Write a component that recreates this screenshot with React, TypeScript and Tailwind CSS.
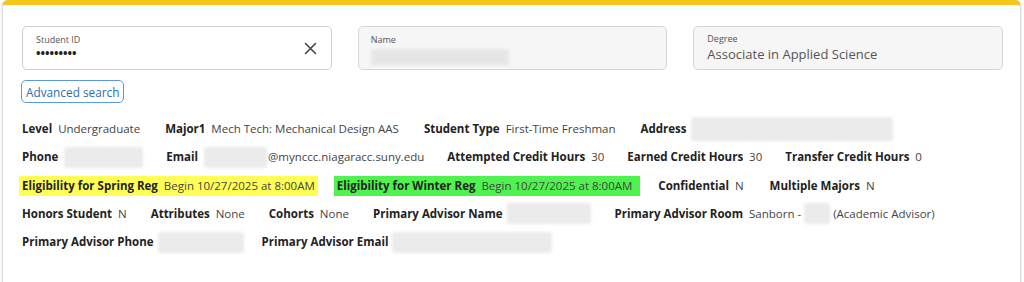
import React from "react";

const Blur = ({ w, h = 21 }: { w: number; h?: number }) => (
  <span
    className="inline-block shrink-0 rounded-[3px] bg-[#ebebeb] blur-[1.5px]"
    style={{ width: w, height: h }}
  />
);

const Item = ({ label, children, tight }: { label: string; children?: React.ReactNode; tight?: boolean }) => (
  <div className={tight ? "flex items-center gap-[4px] whitespace-nowrap" : "flex items-center gap-[6px] whitespace-nowrap"}>
    <span className="font-bold text-[#222]">{label}</span>
    <span className="flex items-center text-[#444]">{children}</span>
  </div>
);

export default function App() {
  return (
    <div className="w-[1024px] h-[282px] bg-white overflow-hidden" style={{ fontFamily: '"Open Sans", "Noto Sans", sans-serif' }}>
      <div className="ml-[2px] mr-[3px] h-[290px] rounded-t-[6px] border-t-[5px] border-t-[#f5c518] border-x border-x-[#dcdcdc] bg-white shadow-[0_0_3px_rgba(0,0,0,0.12)]">
        <div className="pl-[19px] pr-[17px] pt-[21px]">
          <div className="grid grid-cols-3 gap-x-[26px]">
            <div className="relative h-[44px] rounded-[5px] border border-[#cfcfcf] bg-white px-[13px] pt-[7px]">
              <div className="text-[9px] leading-[12px] text-[#555]">Student ID</div>
              <div className="text-[12px] leading-[16px] text-[#222] font-bold">•••••••••</div>
              <svg className="absolute right-[14px] top-[15px]" width="13" height="13" viewBox="0 0 13 13">
                <path d="M1.5 1.5 L11.5 11.5 M11.5 1.5 L1.5 11.5" stroke="#444" strokeWidth="1.6" strokeLinecap="round" />
              </svg>
            </div>
            <div className="h-[44px] rounded-[5px] border border-[#d6d6d6] bg-[#f6f6f6] px-[12px] pt-[7px]">
              <div className="text-[9px] leading-[12px] text-[#555]">Name</div>
              <span className="mt-[3px] inline-block h-[16px] w-[138px] rounded-[2px] bg-[#e6e6e6] blur-[1.5px]" />
            </div>
            <div className="h-[44px] rounded-[5px] border border-[#d6d6d6] bg-[#f6f6f6] px-[13px] pt-[6px]">
              <div className="text-[9px] leading-[12px] text-[#555]">Degree</div>
              <div className="text-[13px] leading-[18px] text-[#555]">Associate in Applied Science</div>
            </div>
          </div>
          <button className="-ml-[1px] mt-[10px] h-[23px] rounded-[5px] border border-[#5b9bd5] px-[4px] text-[11.8px] leading-[20px] text-[#2a6fb0]">
            Advanced search
          </button>
          <div className="mt-[16px] flex flex-col gap-[8.25px] text-[11.5px] leading-[20px]">
            <div className="flex h-[20px] items-center gap-x-[25px]">
              <Item label="Level">Undergraduate</Item>
              <Item label="Major1">Mech Tech: Mechanical Design AAS</Item>
              <Item label="Student Type">First-Time Freshman</Item>
              <Item label="Address" tight><Blur w={202} h={24} /></Item>
            </div>
            <div className="flex h-[20px] items-center gap-x-[23px]">
              <Item label="Phone"><Blur w={79} /></Item>
              <Item label="Email"><Blur w={63} /><span className="ml-[1px]">@mynccc.niagaracc.suny.edu</span></Item>
              <Item label="Attempted Credit Hours">30</Item>
              <Item label="Earned Credit Hours">30</Item>
              <Item label="Transfer Credit Hours">0</Item>
            </div>
            <div className="flex h-[20px] items-center -ml-[3px]">
              <div className="bg-[#ffff55] px-[3px]"><Item label="Eligibility for Spring Reg">Begin 10/27/2025 at 8:00AM</Item></div>
              <div className="ml-[16px] bg-[#4ff24f] pl-[3px] pr-[8px]"><Item label="Eligibility for Winter Reg">Begin 10/27/2025 at 8:00AM</Item></div>
              <div className="ml-[18px] flex items-center gap-x-[26px]">
                <Item label="Confidential">N</Item>
                <Item label="Multiple Majors">N</Item>
              </div>
            </div>
            <div className="flex h-[20px] items-center gap-x-[24px]">
              <Item label="Honors Student">N</Item>
              <Item label="Attributes">None</Item>
              <Item label="Cohorts">None</Item>
              <Item label="Primary Advisor Name" tight><Blur w={84} /></Item>
              <Item label="Primary Advisor Room">Sanborn -<span className="ml-[3px] mr-[3px] flex"><Blur w={26} /></span>(Academic Advisor)</Item>
            </div>
            <div className="flex h-[20px] items-center gap-x-[18px]">
              <Item label="Primary Advisor Phone" tight><Blur w={86} /></Item>
              <Item label="Primary Advisor Email" tight><Blur w={160} /></Item>
            </div>
          </div>
        </div>
      </div>
    </div>
  );
}
